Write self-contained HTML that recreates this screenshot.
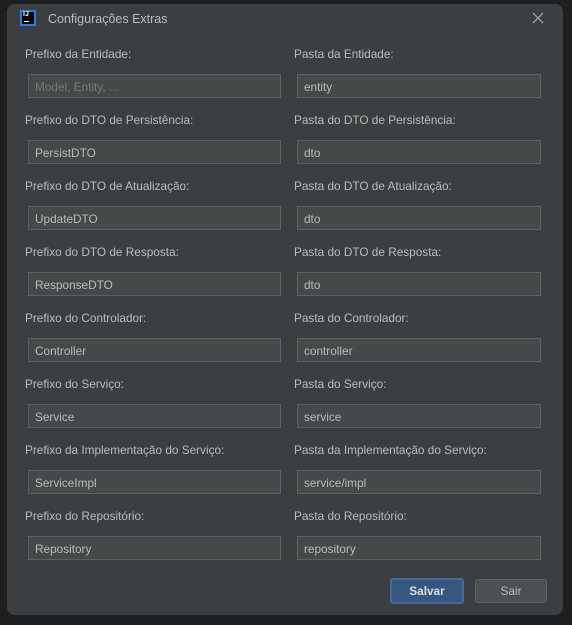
<!DOCTYPE html>
<html><head><meta charset="utf-8"><style>
body{margin:0;width:572px;height:625px;background:#1e1f20;position:relative;overflow:hidden;font-family:"Liberation Sans",sans-serif;font-size:11.8px;color:#bbbbbb}
.win{position:absolute;left:7px;top:4px;width:556px;height:611px;background:#3c3f41;border-radius:8px}
.t{position:absolute;white-space:nowrap;line-height:14px}
.f{position:absolute;height:22px;border:1px solid #5e6163;background:#45494a;box-sizing:content-box}
.f span{position:absolute;left:6px;top:5px;line-height:14px;color:#bbbbbb}
.btn{position:absolute;top:579px;height:22px;border-radius:3px;text-align:center;line-height:23px}
</style></head><body>
<div class="win"></div>
<div style="position:absolute;left:20px;top:10px;width:12px;height:12px;background:#000;border:2px solid #2b7de0"></div>
<div class="t" style="left:23px;top:11px;font-size:7px;color:#fff;font-weight:bold;line-height:8px">IJ</div>
<div style="position:absolute;left:24px;top:21px;width:5px;height:1px;background:#fff"></div>
<div class="t" style="left:48px;top:12px;font-size:12.5px;color:#bbbbbb">Configurações Extras</div>
<svg style="position:absolute;left:532px;top:12px" width="12" height="12"><path d="M1 1L11 11M11 1L1 11" stroke="#aaa" stroke-width="1.2"/></svg>
<div id="c"></div>
<script>
var L=[["Prefixo da Entidade:","Model, Entity, ...","Pasta da Entidade:","entity"],
["Prefixo do DTO de Persistência:","PersistDTO","Pasta do DTO de Persistência:","dto"],
["Prefixo do DTO de Atualização:","UpdateDTO","Pasta do DTO de Atualização:","dto"],
["Prefixo do DTO de Resposta:","ResponseDTO","Pasta do DTO de Resposta:","dto"],
["Prefixo do Controlador:","Controller","Pasta do Controlador:","controller"],
["Prefixo do Serviço:","Service","Pasta do Serviço:","service"],
["Prefixo da Implementação do Serviço:","ServiceImpl","Pasta da Implementação do Serviço:","service/impl"],
["Prefixo do Repositório:","Repository","Pasta do Repositório:","repository"]];
var h="";
L.forEach(function(r,i){var y=74+66*i;
h+='<div class="t" style="left:25px;top:'+(y-27)+'px">'+r[0]+'</div>';
h+='<div class="f" style="left:28px;top:'+y+'px;width:251px"><span'+(i==0?' style="color:#787878"':'')+'>'+r[1]+'</span></div>';
h+='<div class="t" style="left:294px;top:'+(y-27)+'px">'+r[2]+'</div>';
h+='<div class="f" style="left:297px;top:'+y+'px;width:242px"><span>'+r[3]+'</span></div>';});
document.getElementById("c").innerHTML=h;
</script>
<div class="btn" style="left:390px;width:70px;background:#365880;border:2px solid #46699a;top:578px;color:#ddd;font-weight:bold">Salvar</div>
<div class="btn" style="left:475px;width:70px;background:#4c5052;border:1px solid #5e6163">Sair</div>
</body></html>
